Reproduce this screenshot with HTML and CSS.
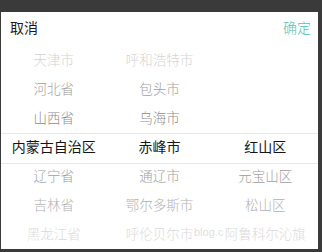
FILE: index.html
```html
<!DOCTYPE html>
<html lang="zh-CN">
<head>
<meta charset="utf-8">
<link rel="stylesheet" href="styles.css">
</head>
<body>
<div class="frame">
  <div class="sheet">
    <div class="header">
      <span class="cancel">取消</span>
      <span class="ok">确定</span>
    </div>
    <div class="picker">
      <div class="sel-band"></div>
      <div class="col">
        <div class="item d3">天津市</div>
        <div class="item d2">河北省</div>
        <div class="item d1">山西省</div>
        <div class="item sel">内蒙古自治区</div>
        <div class="item u1">辽宁省</div>
        <div class="item u2">吉林省</div>
        <div class="item u3">黑龙江省</div>
      </div>
      <div class="col">
        <div class="item d3">呼和浩特市</div>
        <div class="item d2">包头市</div>
        <div class="item d1">乌海市</div>
        <div class="item sel">赤峰市</div>
        <div class="item u1">通辽市</div>
        <div class="item u2">鄂尔多斯市</div>
        <div class="item u3">呼伦贝尔市</div>
      </div>
      <div class="col">
        <div class="item"></div>
        <div class="item"></div>
        <div class="item"></div>
        <div class="item sel">红山区</div>
        <div class="item u1">元宝山区</div>
        <div class="item u2">松山区</div>
        <div class="item u3">阿鲁科尔沁旗</div>
      </div>
      <span class="watermark">blog.c</span>
    </div>
  </div>
</div>
</body>
</html>
```

FILE: styles.css
```css
html, body {
  margin: 0;
  padding: 0;
  background: #3a3a3a;
}
body {
  width: 322px;
  height: 252px;
  overflow: hidden;
  font-family: "Noto Sans CJK SC", "Noto Sans", sans-serif;
}
.frame {
  box-sizing: border-box;
  width: 322px;
  height: 252px;
  padding: 12px 4px 3px 1px;
  background: #3a3a3a;
}
.sheet {
  background: #fff;
  height: 100%;
  display: flex;
  flex-direction: column;
  overflow: hidden;
}
.header {
  box-sizing: border-box;
  height: 35px;
  flex: none;
  display: flex;
  justify-content: space-between;
  align-items: center;
  padding: 0 7px 5px 9px;
  font-size: 14px;
  font-weight: 300;
}
.cancel {
  color: #1a1a1a;
  font-weight: 400;
}
.ok {
  color: #55c2a8;
}
.picker {
  position: relative;
  flex: 1;
  display: grid;
  grid-template-columns: 1fr 1fr 1fr;
  overflow: hidden;
}
.sel-band {
  position: absolute;
  left: 0;
  right: 0;
  top: 86px;
  height: 29px;
  border-top: 1px solid #e8e8e8;
  border-bottom: 1px solid #e8e8e8;
}
.col {
  display: flex;
  flex-direction: column;
}
.item {
  box-sizing: border-box;
  height: 29px;
  padding-bottom: 5px;
  flex: none;
  display: flex;
  align-items: center;
  justify-content: center;
  font-size: 13.5px;
  font-weight: 300;
  white-space: nowrap;
}
.item.sel {
  color: #151515;
  font-size: 14px;
  font-weight: 400;
  padding-bottom: 5px;
}
.d3 { color: #d3d3d3; }
.d2 { color: #a0a0a0; }
.d1 { color: #8c8c8c; }
.u1 { color: #9e9e9e; }
.u2 { color: #b2b2b2; }
.u3 { color: #dadada; }
.watermark {
  position: absolute;
  left: 193px;
  top: 179px;
  font-family: "Liberation Sans", sans-serif;
  font-size: 11px;
  color: rgba(200, 200, 200, 0.6);
}
```
